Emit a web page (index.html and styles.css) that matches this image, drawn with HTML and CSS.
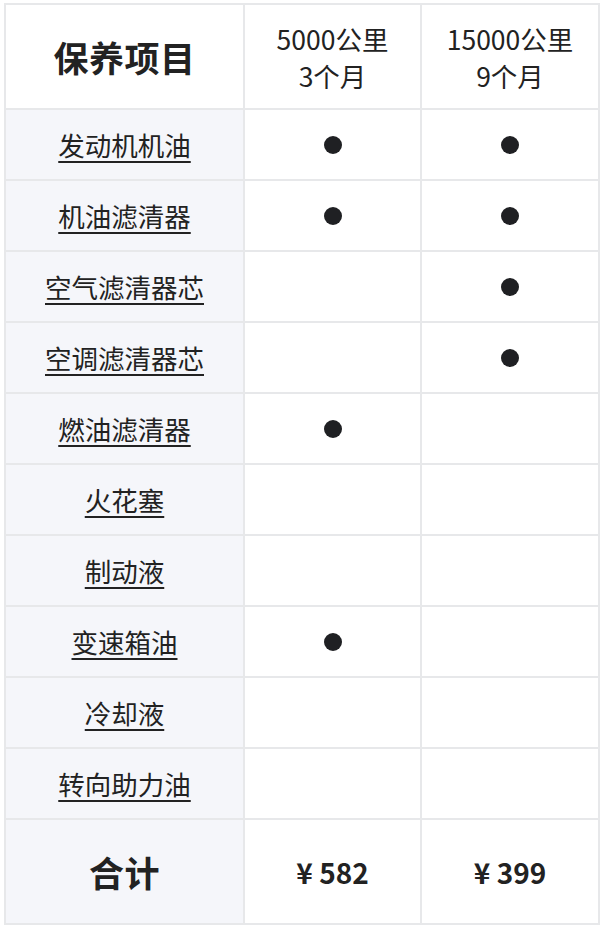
FILE: index.html
```html
<!DOCTYPE html>
<html lang="zh">
<head>
<meta charset="utf-8">
<link rel="stylesheet" href="styles.css">
</head>
<body>
<table class="plan">
  <colgroup>
    <col class="c-item">
    <col class="c-a">
    <col class="c-b">
  </colgroup>
  <thead>
    <tr class="head">
      <th class="title">保养项目</th>
      <th class="interval">5000公里<br>3个月</th>
      <th class="interval">15000公里<br>9个月</th>
    </tr>
  </thead>
  <tbody>
    <tr><td class="item"><span>发动机机油</span></td><td><i class="dot"></i></td><td><i class="dot"></i></td></tr>
    <tr><td class="item"><span>机油滤清器</span></td><td><i class="dot"></i></td><td><i class="dot"></i></td></tr>
    <tr><td class="item"><span>空气滤清器芯</span></td><td></td><td><i class="dot"></i></td></tr>
    <tr><td class="item"><span>空调滤清器芯</span></td><td></td><td><i class="dot"></i></td></tr>
    <tr><td class="item"><span>燃油滤清器</span></td><td><i class="dot"></i></td><td></td></tr>
    <tr><td class="item"><span>火花塞</span></td><td></td><td></td></tr>
    <tr><td class="item"><span>制动液</span></td><td></td><td></td></tr>
    <tr><td class="item"><span>变速箱油</span></td><td><i class="dot"></i></td><td></td></tr>
    <tr><td class="item"><span>冷却液</span></td><td></td><td></td></tr>
    <tr><td class="item"><span>转向助力油</span></td><td></td><td></td></tr>
  </tbody>
  <tfoot>
    <tr class="total">
      <td class="sum">合计</td>
      <td class="price">¥ 582</td>
      <td class="price">¥ 399</td>
    </tr>
  </tfoot>
</table>
</body>
</html>
```
FILE: styles.css
```css
html, body {
  margin: 0;
  padding: 0;
  background: #ffffff;
}
body {
  padding: 3px 2px 0 4px;
  font-family: "Noto Sans CJK SC", "Noto Sans", sans-serif;
  color: #222222;
}
.plan {
  border-collapse: collapse;
  table-layout: fixed;
  width: 594px;
}
.c-item { width: 239px; }
.c-a { width: 177px; }
.c-b { width: 178px; }
.plan th, .plan td {
  border: 2px solid #e7e8ea;
  text-align: center;
  vertical-align: middle;
  padding: 0;
  height: 69px;
}
.head th {
  height: 103px;
  font-weight: 400;
}
.head th.title {
  font-size: 35px;
  font-weight: 700;
  letter-spacing: 0.5px;
  background: #ffffff;
}
.interval {
  font-size: 26.5px;
  line-height: 37px;
  padding-top: 2px;
}
.item {
  background: #f5f6fa;
  font-size: 26.5px;
}
.item span {
  text-decoration: underline;
  text-decoration-thickness: 1.5px;
  text-underline-offset: 5px;
}
.dot {
  display: block;
  width: 18px;
  height: 18px;
  border-radius: 50%;
  background: #1f2023;
  margin: 0 auto;
}
.total td {
  height: 103px;
}
.total td.sum {
  background: #f5f6fa;
  font-size: 35px;
  font-weight: 700;
  letter-spacing: 0.5px;
}
.price {
  font-size: 28px;
  font-weight: 700;
}
```
